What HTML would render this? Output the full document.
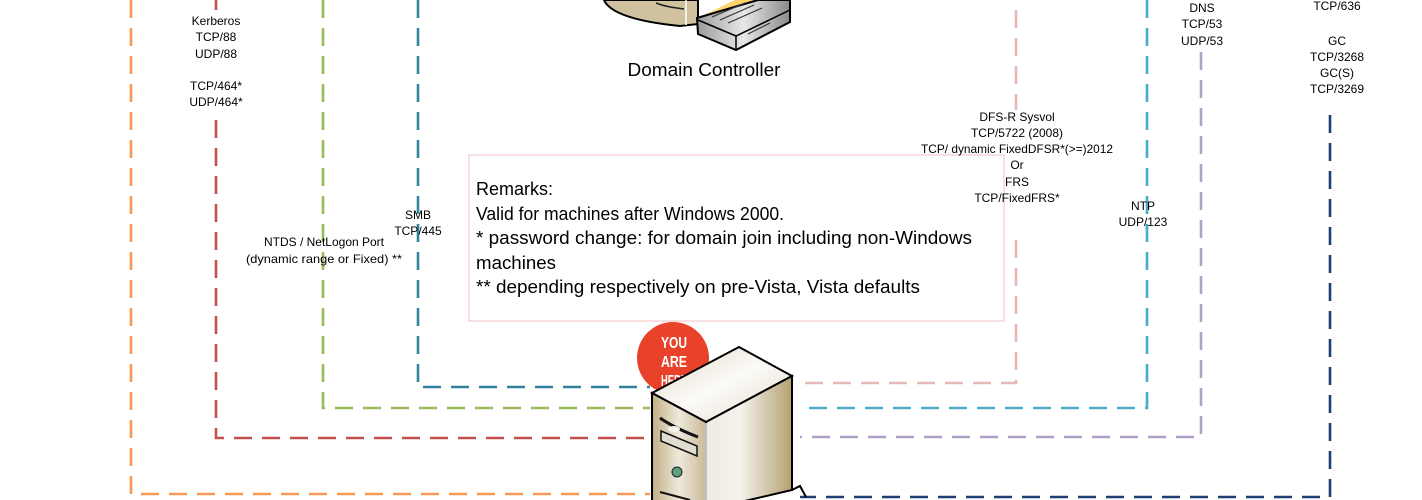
<!DOCTYPE html>
<html><head><meta charset="utf-8"><style>
html,body{margin:0;padding:0;background:#fff;width:1422px;height:500px;overflow:hidden}
svg{display:block}
text{font-family:"Liberation Sans",sans-serif;fill:#000}
.s{font-size:12px;text-anchor:middle}
</style></head><body>
<svg width="1422" height="500" viewBox="0 0 1422 500">
<defs>
<linearGradient id="fr" x1="0" x2="1"><stop offset="0" stop-color="#c2ae84"/><stop offset=".5" stop-color="#efe9dc"/><stop offset="1" stop-color="#c9b996"/></linearGradient>
<linearGradient id="rt" x1="0" x2="1"><stop offset="0" stop-color="#efebe2"/><stop offset=".4" stop-color="#f5f2ec"/><stop offset="1" stop-color="#b5a172"/></linearGradient>
<linearGradient id="tp" x1="0" y1="0" x2="1" y2="1"><stop offset="0" stop-color="#e2d9c6"/><stop offset=".5" stop-color="#fbfaf7"/><stop offset="1" stop-color="#e4dccb"/></linearGradient>
<linearGradient id="bk" x1="0" x2="1"><stop offset="0" stop-color="#9a9a9a"/><stop offset=".5" stop-color="#e8e8e8"/><stop offset="1" stop-color="#8a8a8a"/></linearGradient>
</defs>
<g fill="none" stroke-width="2.6" stroke-dasharray="18 10" stroke-linecap="butt">
<path d="M131 0 V494 H650" stroke="#f79a55"/>
<path d="M216 120 V438 H650" stroke="#c2504c"/>
<path d="M216 0 V10" stroke="#c2504c"/>
<path d="M323 0 V408 H650" stroke="#9bbb59"/>
<path d="M418 0 V387 H650" stroke="#31849b"/>
<path d="M1016 10 V110 M1016 240 V383 H800" stroke="#e6b9b8"/>
<path d="M1147 0 V408 H800" stroke="#4bacc6"/>
<path d="M1201 52 V437 H800" stroke="#b1a0c7"/>
<path d="M1330 115 V497 H800" stroke="#1f3f73"/>
</g>
<!-- Domain controller -->
<path d="M604 0 C610 14 640 22 680 26 L698 24 L698 0 Z" fill="#d0c29f" stroke="#000" stroke-width="2"/>
<path d="M686 0 V25" stroke="#fff" stroke-width="1.5"/>
<path d="M656 3 C666 7 676 8 684 9" stroke="#222" stroke-width="1.5" fill="none"/>
<path d="M700 17 L735 0 L760 0 Z" fill="#ffd36b"/>
<path d="M697 18 L758 0 L790 0 L790 22 L736 50 L698 34 Z" fill="url(#bk)" stroke="#000" stroke-width="2"/>
<path d="M698 20 L736 36 L790 10" stroke="#000" stroke-width="1.5" fill="none"/>
<path d="M736 36 V50" stroke="#000" stroke-width="1.5"/>
<g stroke="#333" stroke-width="1.2"><path d="M712 17 L745 3"/><path d="M720 20 L754 5"/><path d="M728 23 L762 8"/><path d="M748 34 L770 23"/></g>
<text x="704" y="76" style="font-size:18px;text-anchor:middle" textLength="153" lengthAdjust="spacingAndGlyphs">Domain Controller</text>
<!-- remarks -->
<rect x="469" y="155" width="535" height="166" fill="#fff" stroke="#f2cccc" stroke-width="1.2"/>
<g style="font-size:18px">
<text x="476" y="195" textLength="77" lengthAdjust="spacingAndGlyphs">Remarks:</text>
<text x="476" y="220" textLength="308" lengthAdjust="spacingAndGlyphs">Valid for machines after Windows 2000.</text>
<text x="476" y="244" textLength="496" lengthAdjust="spacingAndGlyphs">* password change: for domain join including non-Windows</text>
<text x="476" y="269" textLength="80" lengthAdjust="spacingAndGlyphs">machines</text>
<text x="476" y="293" textLength="444" lengthAdjust="spacingAndGlyphs">** depending respectively on pre-Vista, Vista defaults</text>
</g>
<!-- labels -->
<g>
<text class="s" x="216" y="25">Kerberos</text>
<text class="s" x="216" y="41">TCP/88</text>
<text class="s" x="216" y="58">UDP/88</text>
<text class="s" x="216" y="90">TCP/464*</text>
<text class="s" x="216" y="106">UDP/464*</text>
<text class="s" x="418" y="219">SMB</text>
<text class="s" x="418" y="235">TCP/445</text>
<text class="s" x="324" y="246" textLength="120" lengthAdjust="spacingAndGlyphs">NTDS / NetLogon Port</text>
<text class="s" x="324" y="263" textLength="156" lengthAdjust="spacingAndGlyphs">(dynamic range  or Fixed) **</text>
<text class="s" x="1017" y="121">DFS-R Sysvol</text>
<text class="s" x="1017" y="137">TCP/5722 (2008)</text>
<text class="s" x="1017" y="153" textLength="192" lengthAdjust="spacingAndGlyphs">TCP/ dynamic FixedDFSR*(&gt;=)2012</text>
<text class="s" x="1017" y="169">Or</text>
<text class="s" x="1017" y="186">FRS</text>
<text class="s" x="1017" y="202">TCP/FixedFRS*</text>
<text class="s" x="1143" y="210">NTP</text>
<text class="s" x="1143" y="226">UDP/123</text>
<text class="s" x="1202" y="12">DNS</text>
<text class="s" x="1202" y="28">TCP/53</text>
<text class="s" x="1202" y="45">UDP/53</text>
<text class="s" x="1337" y="10">TCP/636</text>
<text class="s" x="1337" y="45">GC</text>
<text class="s" x="1337" y="61">TCP/3268</text>
<text class="s" x="1337" y="77">GC(S)</text>
<text class="s" x="1337" y="93">TCP/3269</text>
</g>
<!-- you are here -->
<circle cx="673" cy="358" r="36" fill="#e8432a"/>
<g style="font-size:16px;font-weight:bold;text-anchor:middle">
<text x="674" y="348" style="fill:#fff" textLength="26" lengthAdjust="spacingAndGlyphs">YOU</text>
<text x="674" y="367" style="fill:#fff" textLength="26" lengthAdjust="spacingAndGlyphs">ARE</text>
<text x="674" y="386" style="fill:#fff" textLength="26" lengthAdjust="spacingAndGlyphs">HERE</text>
</g>
<!-- server -->
<path d="M652 393 L739 347 L792 376 L706 422 Z" fill="url(#tp)" stroke="#000" stroke-width="2"/>
<path d="M652 393 L706 422 L706 510 L652 510 Z" fill="url(#fr)" stroke="#000" stroke-width="2"/>
<path d="M706 422 L792 376 L792 490 L706 510 Z" fill="url(#rt)" stroke="#000" stroke-width="2"/>
<path d="M706 423 V510" stroke="#fff" stroke-width="1.5"/>
<path d="M660 418 C670 425 685 432 698 437" stroke="#111" stroke-width="3" fill="none"/>
<ellipse cx="674" cy="429" rx="6" ry="3" fill="#f5f3ea"/>
<path d="M661 431 L697 446 L697 456 L661 441 Z" fill="#e0dccf" stroke="#111" stroke-width="1.5"/>
<circle cx="677" cy="472" r="5" fill="#5fa07c" stroke="#223" stroke-width="1"/>
<path d="M660 492 L690 500" stroke="#111" stroke-width="2"/>
<path d="M792 490 L800 486 L806 497" stroke="#000" stroke-width="2" fill="none"/>
</svg>
</body></html>
